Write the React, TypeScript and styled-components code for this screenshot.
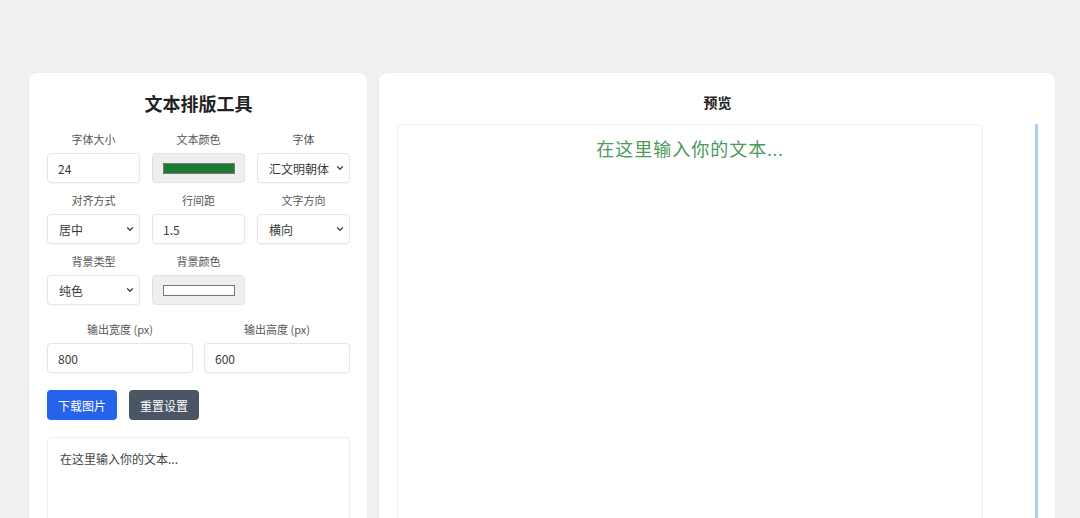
import React, { useState } from "react";
import styled, { createGlobalStyle } from "styled-components";

const GlobalStyle = createGlobalStyle`
  html, body {
    margin: 0;
    padding: 0;
    background: #f0f0f0;
    font-family: "Noto Sans CJK SC", "Noto Sans", sans-serif;
    color: #333;
  }
  * { box-sizing: border-box; }
`;

const Chevron = () => (
  <ChevronIcon viewBox="0 0 10 10" aria-hidden="true">
    <path d="M2.5 3.8 L5 6.2 L7.5 3.8" fill="none" stroke="#444" strokeWidth="1.3" strokeLinecap="round" strokeLinejoin="round" />
  </ChevronIcon>
);

const Dropdown = ({ label }: { label: string }) => (
  <SelectWrap>
    <Select defaultValue="v">
      <option value="v">{label}</option>
    </Select>
    <Chevron />
  </SelectWrap>
);

const App = () => {
  const [text, setText] = useState("在这里输入你的文本...");

  return (
    <>
      <GlobalStyle />
      <Page>
        <ControlPanel>
          <Title>文本排版工具</Title>
          <Grid3>
            <Field>
              <Label>字体大小</Label>
              <TextInput defaultValue="24" />
            </Field>
            <Field>
              <Label>文本颜色</Label>
              <ColorBox>
                <Swatch color="#1e7b36" />
              </ColorBox>
            </Field>
            <Field>
              <Label>字体</Label>
              <Dropdown label="汇文明朝体" />
            </Field>
            <Field>
              <Label>对齐方式</Label>
              <Dropdown label="居中" />
            </Field>
            <Field>
              <Label>行间距</Label>
              <TextInput defaultValue="1.5" />
            </Field>
            <Field>
              <Label>文字方向</Label>
              <Dropdown label="横向" />
            </Field>
            <Field>
              <Label>背景类型</Label>
              <Dropdown label="纯色" />
            </Field>
            <Field>
              <Label>背景颜色</Label>
              <ColorBox>
                <Swatch color="#ffffff" />
              </ColorBox>
            </Field>
          </Grid3>
          <Grid2>
            <Field>
              <Label>输出宽度 (px)</Label>
              <TextInput defaultValue="800" />
            </Field>
            <Field>
              <Label>输出高度 (px)</Label>
              <TextInput defaultValue="600" />
            </Field>
          </Grid2>
          <ButtonRow>
            <Button variant="primary">下载图片</Button>
            <Button variant="secondary">重置设置</Button>
          </ButtonRow>
          <TextArea value={text} onChange={(e) => setText(e.target.value)} />
        </ControlPanel>
        <PreviewPanel>
          <PreviewTitle>预览</PreviewTitle>
          <PreviewRow>
            <Canvas>
              <PreviewText>{text}</PreviewText>
            </Canvas>
            <ScrollLine />
          </PreviewRow>
        </PreviewPanel>
      </Page>
    </>
  );
};

export default App;

const Page = styled.div`
  display: flex;
  gap: 12px;
  padding: 73px 25px 0 29px;
  height: 518px;
  overflow: hidden;
  align-items: flex-start;
`;

const Card = styled.div`
  background: #ffffff;
  border-radius: 8px;
  box-shadow: 0 1px 3px rgba(0, 0, 0, 0.06);
  padding: 18px 17px 18px 18px;
`;

const ControlPanel = styled(Card)`
  width: 338px;
  flex-shrink: 0;
  display: flex;
  flex-direction: column;
`;

const Title = styled.h1`
  margin: 0;
  font-size: 18px;
  line-height: 24px;
  font-weight: 700;
  text-align: center;
  color: #222;
`;

const Grid3 = styled.div`
  display: grid;
  grid-template-columns: repeat(3, 1fr);
  column-gap: 12px;
  row-gap: 8px;
  margin-top: 15px;
`;

const Grid2 = styled.div`
  display: grid;
  grid-template-columns: repeat(2, 1fr);
  column-gap: 11px;
  margin-top: 15px;
`;

const Field = styled.div`
  display: flex;
  flex-direction: column;
  gap: 5px;
`;

const Label = styled.label`
  font-size: 11px;
  line-height: 18px;
  color: #555;
  text-align: center;
`;

const controlBase = `
  height: 30px;
  width: 100%;
  border: 1px solid #e6e6e6;
  border-radius: 4px;
  background: #ffffff;
  font-family: "Noto Sans CJK SC", "Noto Sans", sans-serif;
  font-size: 12px;
  color: #3a3a3a;
  box-shadow: 0 1px 2px rgba(0, 0, 0, 0.04);
  outline: none;
`;

const TextInput = styled.input`
  ${controlBase}
  padding: 0 10px;
`;

const SelectWrap = styled.div`
  position: relative;
  width: 100%;
`;

const Select = styled.select`
  ${controlBase}
  appearance: none;
  -webkit-appearance: none;
  padding: 0 18px 0 11px;
`;

const ChevronIcon = styled.svg`
  position: absolute;
  right: 5px;
  top: 10px;
  width: 10px;
  height: 10px;
  pointer-events: none;
`;

const ColorBox = styled.div`
  height: 30px;
  width: 100%;
  border: 1px solid #e2e2e2;
  border-radius: 4px;
  background: #efefef;
  display: flex;
  align-items: center;
  justify-content: center;
`;

const Swatch = styled.div<{ color: string }>`
  width: 72px;
  height: 11px;
  background: ${(p) => p.color};
  border: 1px solid #777;
`;

const ButtonRow = styled.div`
  display: flex;
  gap: 12px;
  margin-top: 17px;
`;

const Button = styled.button<{ variant: "primary" | "secondary" }>`
  width: 70px;
  height: 30px;
  border: none;
  border-radius: 4px;
  color: #fff;
  font-family: "Noto Sans CJK SC", "Noto Sans", sans-serif;
  font-size: 12px;
  cursor: pointer;
  background: ${(p) => (p.variant === "primary" ? "#2563eb" : "#4b5563")};
`;

const TextArea = styled.textarea`
  margin-top: 17px;
  height: 160px;
  width: 100%;
  resize: vertical;
  border: 1px solid #ececec;
  border-radius: 4px;
  padding: 12px;
  font-family: "Noto Sans CJK SC", "Noto Sans", sans-serif;
  font-size: 12px;
  line-height: 18px;
  color: #444;
  outline: none;
`;

const PreviewPanel = styled(Card)`
  flex: 1;
  height: 520px;
  display: flex;
  flex-direction: column;
`;

const PreviewTitle = styled.h2`
  margin: 0;
  font-size: 14px;
  line-height: 22px;
  font-weight: 700;
  text-align: center;
  color: #222;
`;

const PreviewRow = styled.div`
  display: flex;
  justify-content: space-between;
  margin-top: 11px;
  flex: 1;
`;

const Canvas = styled.div`
  width: 586px;
  border: 1px solid #eeeeee;
  border-radius: 6px;
  background: #fff;
  padding-top: 12px;
`;

const PreviewText = styled.div`
  text-align: center;
  font-family: "Liberation Serif", "Noto Sans CJK SC", serif;
  font-size: 18px;
  line-height: 27px;
  letter-spacing: 1px;
  color: #4a9a5a;
`;

const ScrollLine = styled.div`
  width: 3px;
  background: #a9cff2;
  border-radius: 1px;
`;
